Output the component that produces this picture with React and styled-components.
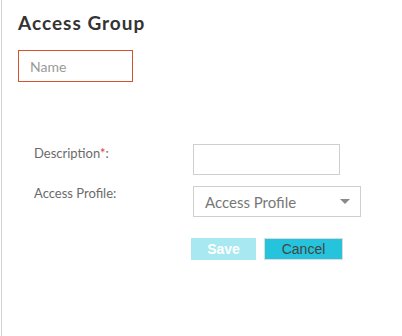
import React from "react";
import styled, { createGlobalStyle } from "styled-components";

const GlobalStyle = createGlobalStyle`
  html, body {
    margin: 0;
    padding: 0;
    background: #fff;
  }
  body {
    font-family: Lato, "Liberation Sans", sans-serif;
  }
`;

const Page = styled.div`
  box-sizing: border-box;
  height: 336px;
  margin-left: 1px;
  border-left: 1px solid #d2d2d2;
  padding: 12px 0 0 16px;
`;

const Title = styled.h2`
  margin: 0;
  font-size: 19px;
  line-height: 22px;
  font-weight: 700;
  letter-spacing: 1px;
  color: #333;
`;

const NameInput = styled.input`
  box-sizing: border-box;
  display: block;
  width: 115px;
  height: 32px;
  margin-top: 16px;
  padding: 0 11px;
  border: 1px solid #d5512f;
  border-radius: 0;
  outline: none;
  font-family: inherit;
  font-size: 14px;
  color: #333;
  &::placeholder {
    color: #9a9a9a;
  }
`;

const Form = styled.div`
  display: grid;
  grid-template-columns: 159px auto;
  row-gap: 11px;
  align-items: center;
  margin-top: 62px;
  padding-left: 16px;
`;

const Label = styled.label`
  font-size: 13px;
  color: #6b6b6b;
  margin-top: ${(p) => p.$offset || 0}px;
`;

const Star = styled.span`
  color: #e53935;
`;

const TextBox = styled.input`
  box-sizing: border-box;
  width: 147px;
  height: 31px;
  border: 1px solid #cfcfcf;
  border-radius: 0;
  outline: none;
  padding: 0 10px;
  font-family: inherit;
  font-size: 14px;
`;

const Select = styled.div`
  box-sizing: border-box;
  width: 168px;
  height: 31px;
  border: 1px solid #cfcfcf;
  display: flex;
  align-items: center;
  justify-content: space-between;
  padding: 0 10px 0 11px;
  font-size: 15px;
  color: #777;
`;

const Caret = styled.span`
  width: 0;
  height: 0;
  border-left: 5px solid transparent;
  border-right: 5px solid transparent;
  border-top: 5px solid #8a8a8a;
`;

const Actions = styled.div`
  display: flex;
  gap: 8px;
  margin: 21px 0 0 173px;
`;

const Button = styled.button`
  box-sizing: border-box;
  height: 22px;
  width: ${(p) => p.$w}px;
  padding: 0;
  border: 1px solid ${(p) => (p.$primary ? "#a8e8f1" : "#dcdcdc")};
  background: ${(p) => (p.$primary ? "#a8e8f1" : "#25c4dc")};
  color: ${(p) => (p.$primary ? "#fff" : "#444")};
  font-family: "Liberation Sans", Arial, sans-serif;
  font-weight: ${(p) => (p.$primary ? 700 : 400)};
  font-size: 14px;
  line-height: 20px;
  border-radius: 0;
`;

export default function App() {
  return (
    <>
      <GlobalStyle />
      <Page>
        <Title>Access Group</Title>
        <NameInput placeholder="Name" />
        <Form>
          <Label $offset={-14}>
            Description<Star>*</Star>:
          </Label>
          <TextBox />
          <Label $offset={-17}>Access Profile:</Label>
          <Select>
            Access Profile
            <Caret />
          </Select>
        </Form>
        <Actions>
          <Button $primary $w={65}>Save</Button>
          <Button $w={79}>Cancel</Button>
        </Actions>
      </Page>
    </>
  );
}
